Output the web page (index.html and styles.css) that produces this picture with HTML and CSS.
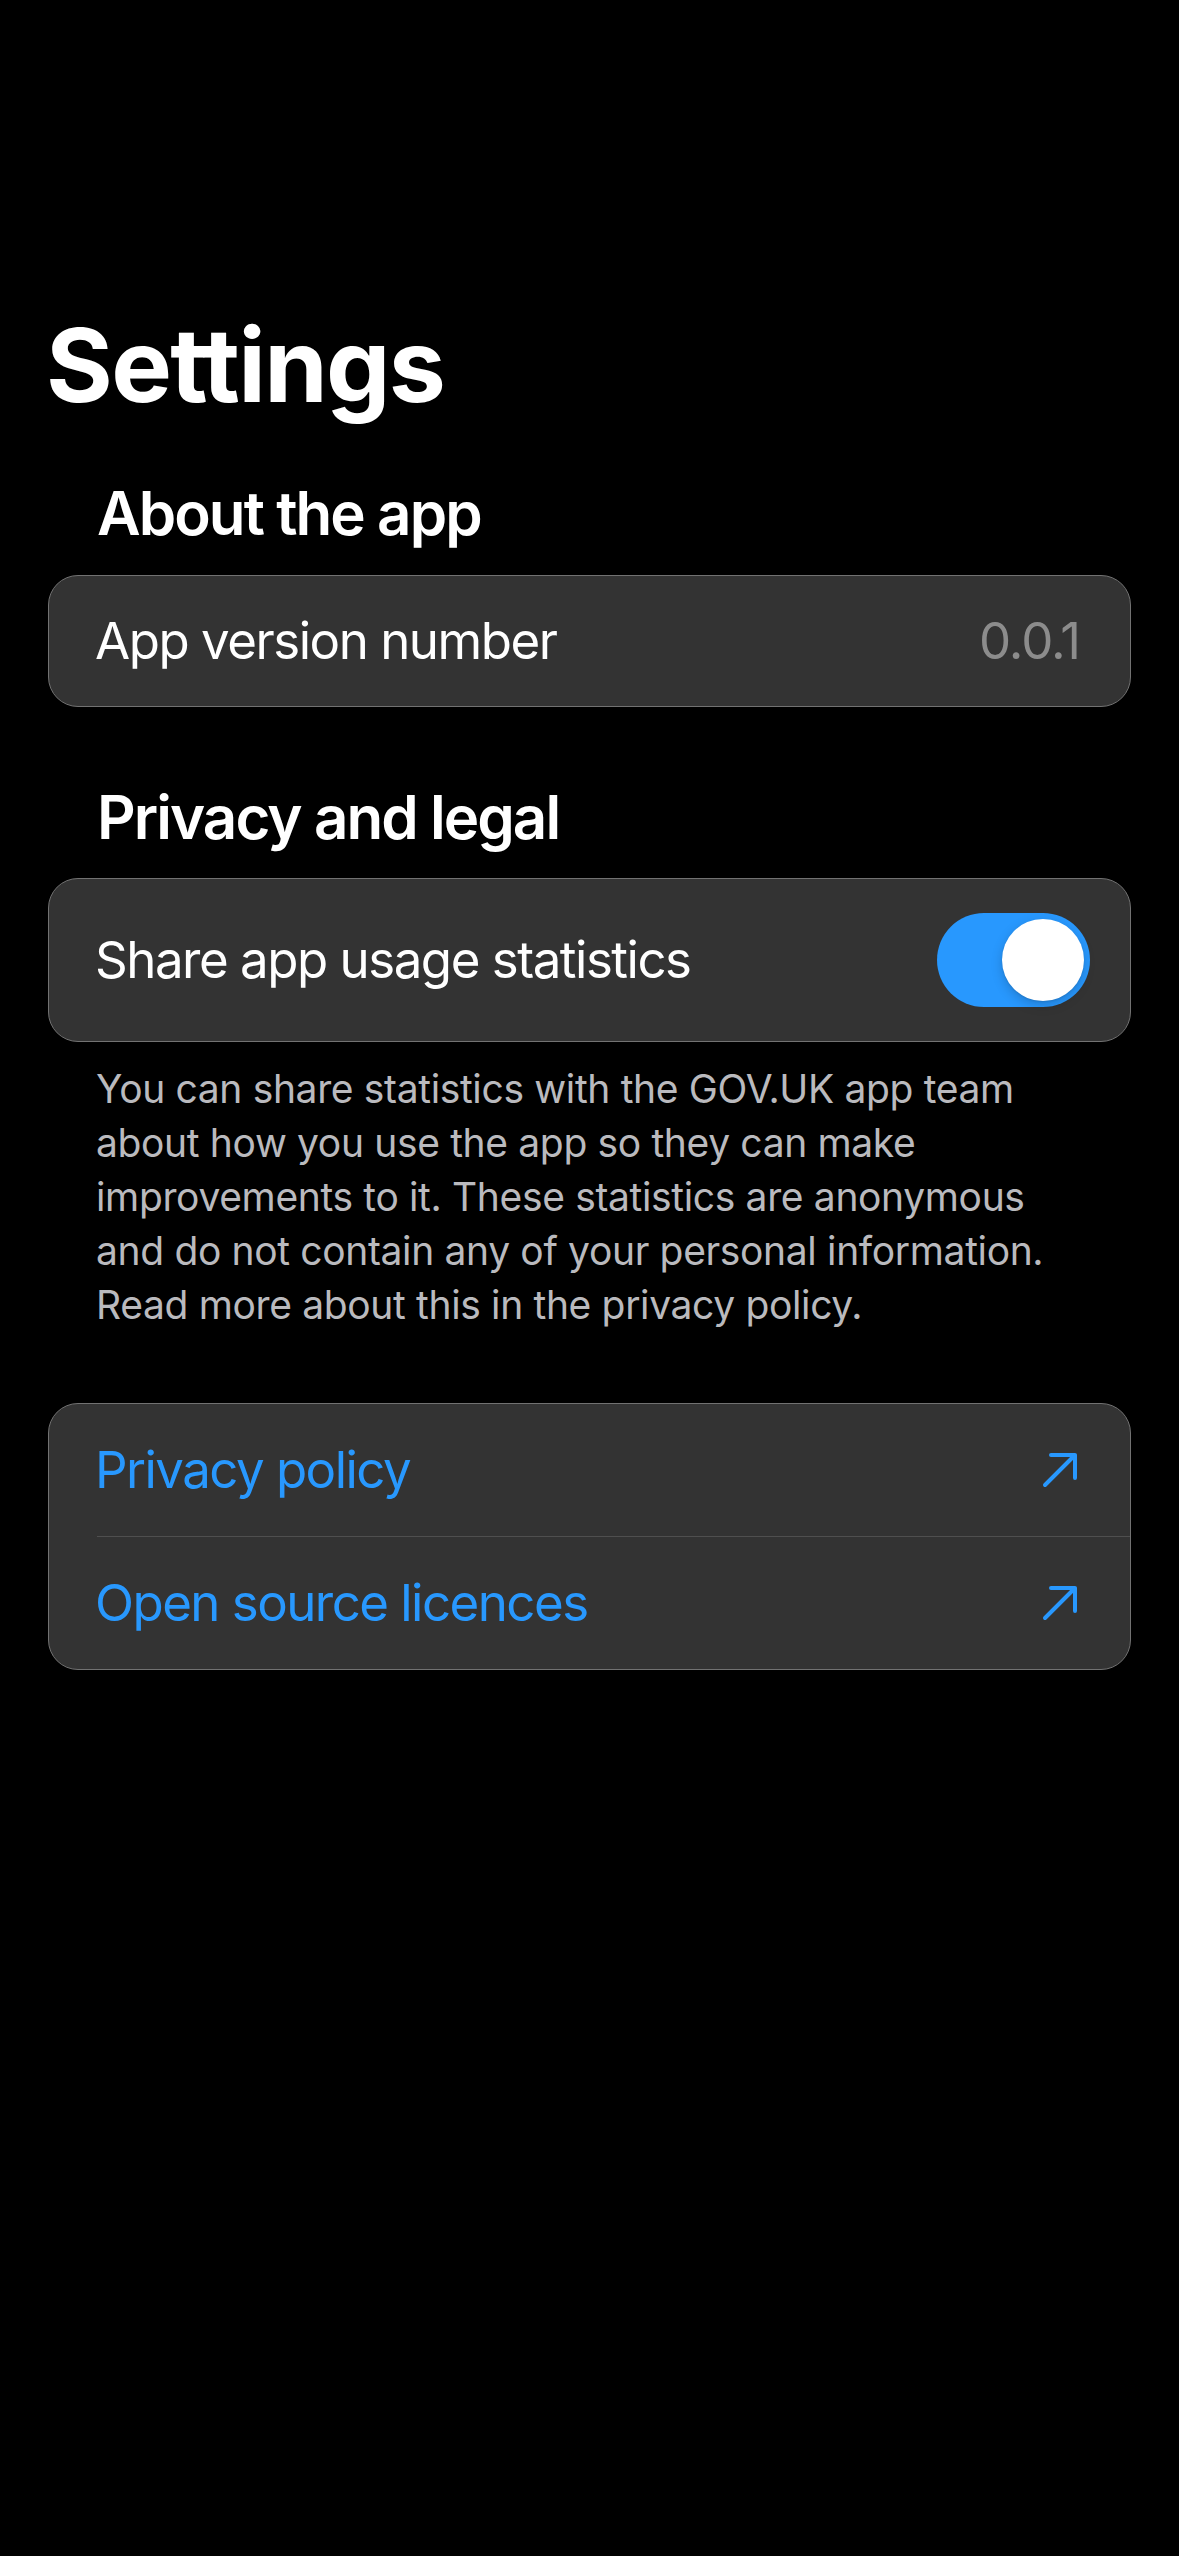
FILE: index.html
```html
<!DOCTYPE html>
<html lang="en">
<head>
<meta charset="utf-8">
<title>Settings</title>
<link rel="stylesheet" href="styles.css">
</head>
<body>
<main class="screen">
  <h1 class="large-title">Settings</h1>

  <section class="group group-about">
    <h2 class="group-heading">About the app</h2>
    <div class="card">
      <div class="row row-info">
        <span class="row-label">App version number</span>
        <span class="row-value">0.0.1</span>
      </div>
    </div>
  </section>

  <section class="group group-privacy">
    <h2 class="group-heading">Privacy and legal</h2>
    <div class="card">
      <div class="row row-toggle">
        <span class="row-label">Share app usage statistics</span>
        <span class="toggle is-on" role="switch" aria-checked="true"><span class="toggle-knob"></span></span>
      </div>
    </div>
    <p class="footnote">You can share statistics with the GOV.UK app team<br>about how you use the app so they can make<br>improvements to it. These statistics are anonymous<br>and do not contain any of your personal information.<br>Read more about this in the privacy policy.</p>
  </section>

  <div class="card card-links">
    <a class="link-row" href="#">
      <span class="link-inner">
        <span class="link-label">Privacy policy</span>
        <svg class="link-icon" viewBox="0 0 40 40" width="40" height="40" aria-hidden="true"><path d="M11 5 H35 V28 M35 5 L5 35" fill="none" stroke="currentColor" stroke-width="4" stroke-linecap="round" stroke-linejoin="round"/></svg>
      </span>
    </a>
    <a class="link-row" href="#">
      <span class="link-inner link-inner-divided">
        <span class="link-label">Open source licences</span>
        <svg class="link-icon" viewBox="0 0 40 40" width="40" height="40" aria-hidden="true"><path d="M11 5 H35 V28 M35 5 L5 35" fill="none" stroke="currentColor" stroke-width="4" stroke-linecap="round" stroke-linejoin="round"/></svg>
      </span>
    </a>
  </div>
</main>
</body>
</html>
```

FILE: styles.css
```css
html, body {
  margin: 0;
  padding: 0;
  background: #000000;
}

body {
  font-family: Inter, "Noto Sans", "Liberation Sans", sans-serif;
  color: #ffffff;
  -webkit-font-smoothing: antialiased;
}

.screen {
  box-sizing: border-box;
  width: 1179px;
  min-height: 2556px;
  padding: 304px 48px 0 48px;
  display: flex;
  flex-direction: column;
}

.large-title {
  margin: 0 0 0 -2px;
  font-size: 102px;
  line-height: 122px;
  font-weight: 700;
  letter-spacing: -0.016em;
}

.group {
  display: flex;
  flex-direction: column;
}

.group-heading {
  margin: 0;
  padding-left: 49px;
  font-size: 60px;
  line-height: 72px;
  font-weight: 600;
  letter-spacing: -0.032em;
}

.group-about .group-heading {
  margin-top: 51px;
}

.group-privacy .group-heading {
  margin-top: 74px;
}

.card {
  background: #333333;
  border: 1px solid #727272;
  border-radius: 30px;
  overflow: hidden;
}

.group-about .card {
  margin-top: 26px;
}

.group-privacy .card {
  margin-top: 25px;
}

.row {
  display: flex;
  align-items: center;
  justify-content: space-between;
  padding-left: 46px;
}

.row-info {
  height: 130px;
  padding-right: 50px;
}

.row-toggle {
  height: 162px;
  padding-right: 40px;
}

.row-label {
  font-size: 51px;
  line-height: 62px;
  font-weight: 400;
  letter-spacing: -0.029em;
  color: #ffffff;
}

.row-value {
  font-size: 51px;
  line-height: 62px;
  letter-spacing: -0.02em;
  color: #8c8c8c;
}

.toggle {
  position: relative;
  width: 153px;
  height: 94px;
  border-radius: 47px;
  background: #2898fe;
  flex: none;
}

.toggle-knob {
  position: absolute;
  top: 6px;
  right: 6px;
  width: 82px;
  height: 82px;
  border-radius: 50%;
  background: #ffffff;
  box-shadow: 0 4px 12px rgba(0, 0, 0, 0.18), 0 1px 2px rgba(0, 0, 0, 0.1);
}

.footnote {
  margin: 20px 0 0 0;
  padding-left: 48px;
  font-size: 39px;
  line-height: 54px;
  letter-spacing: -0.009em;
  color: #bababe;
  white-space: nowrap;
}

.card-links {
  margin-top: 71px;
  display: flex;
  flex-direction: column;
}

.link-row {
  display: flex;
  padding-left: 48px;
  text-decoration: none;
  color: #2898fe;
}

.link-inner {
  flex: 1;
  height: 132px;
  display: flex;
  align-items: center;
  justify-content: space-between;
  padding-right: 50px;
}

.link-inner-divided {
  border-top: 1px solid #4f4f4f;
}

.link-label {
  font-size: 51px;
  line-height: 62px;
  letter-spacing: -0.03em;
  color: #2898fe;
  margin-left: -2px;
}

.link-icon {
  display: block;
  flex: none;
  color: #2898fe;
}
```
